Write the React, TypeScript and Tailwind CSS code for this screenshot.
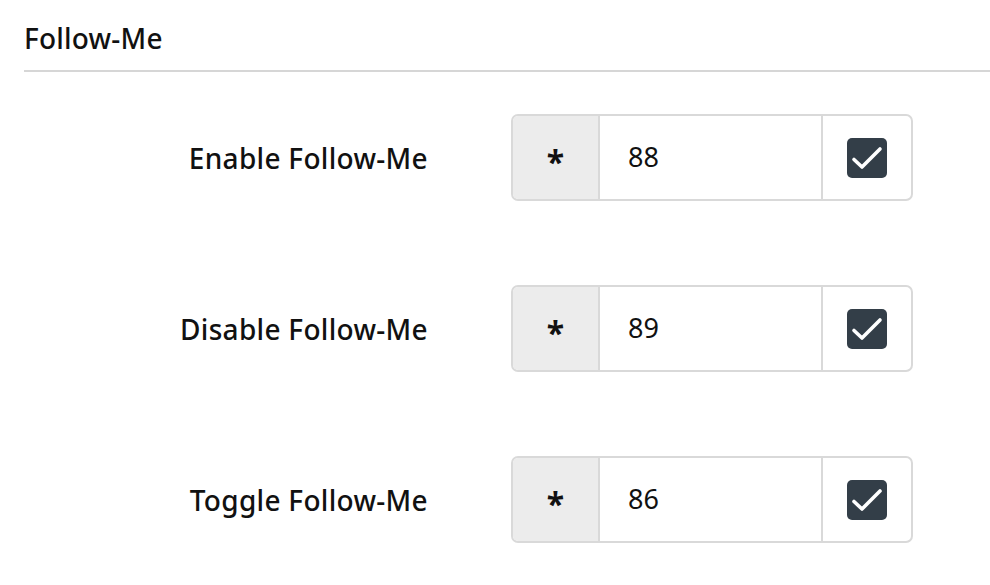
import React from "react";

const rows = [
  { label: "Enable Follow-Me", value: "88" },
  { label: "Disable Follow-Me", value: "89" },
  { label: "Toggle Follow-Me", value: "86" },
];

function Check() {
  return (
    <div className="w-[40px] h-[40px] rounded-[5px] bg-[#333e48]">
      <svg width="40" height="40" viewBox="0 0 40 40" fill="none">
        <path d="M7 21.5l8 7.5 18-18" stroke="#fff" strokeWidth="3.6" strokeLinecap="round" strokeLinejoin="round" />
      </svg>
    </div>
  );
}

export default function App() {
  return (
    <div className="w-[990px] h-[585px] bg-white text-[#111] overflow-hidden" style={{ fontFamily: '"Noto Sans", "Open Sans", sans-serif' }}>
      <div className="pl-6 pt-[20px]">
        <div className="text-[28px] leading-[36px] h-[50px] font-medium tracking-[0.2px]">Follow-Me</div>
        <div className="h-[2px] bg-[#d6d6d6]" />
      </div>
      <div className="flex flex-col gap-[84px] pt-[42px]">
        {rows.map((r) => (
          <div key={r.label} className="flex items-center gap-[83px]">
            <div className="w-[428px] text-right text-[28px] font-medium tracking-[0.3px]">{r.label}</div>
            <div className="w-[402px] h-[87px] flex border-2 border-[#d9d9d9] rounded-[7px] overflow-hidden">
              <div className="w-[87px] bg-[#ececec] border-r-2 border-[#d9d9d9] flex items-center justify-center text-[32px] font-bold leading-none">
                <span className="mt-[8px]">*</span>
              </div>
              <div className="flex-1 flex items-center pl-[28px] text-[27px]">{r.value}</div>
              <div className="w-[90px] border-l-2 border-[#d9d9d9] flex items-center justify-center">
                <Check />
              </div>
            </div>
          </div>
        ))}
      </div>
    </div>
  );
}
